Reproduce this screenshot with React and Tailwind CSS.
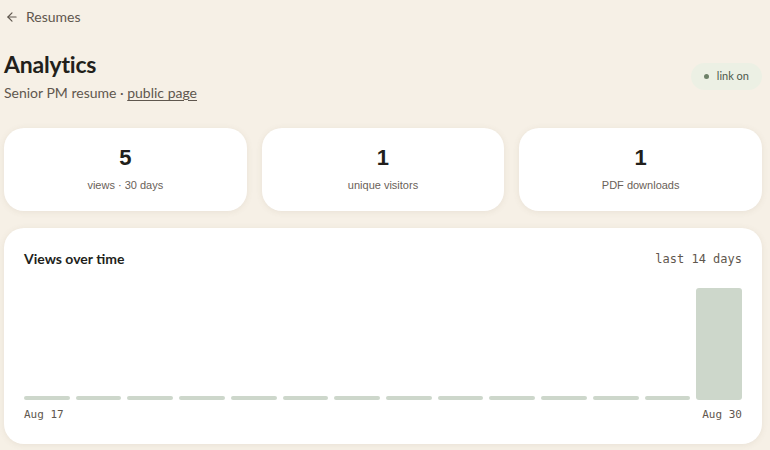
import { ArrowLeft } from 'lucide-react'

const views = [0, 0, 0, 0, 0, 0, 0, 0, 0, 0, 0, 0, 0, 5]

const stats = [
  { value: '5', label: 'views · 30 days' },
  { value: '1', label: 'unique visitors' },
  { value: '1', label: 'PDF downloads' },
]

export default function App() {
  const max = Math.max(...views)

  return (
    <div className="min-h-[450px] bg-[#f6f0e6] pl-[4px] pr-[8px] text-[#221f1b] font-['Lato',sans-serif]">
      <div className="flex items-center gap-[7px] pt-[6px] pl-[1px] text-[14px] text-[#5f574e]">
        <ArrowLeft size={14} strokeWidth={2} />
        <span>Resumes</span>
      </div>

      <div className="mt-[23px] flex items-start justify-between">
        <div>
          <h1 className="text-[23px] font-bold leading-[28px] tracking-[-0.2px]">Analytics</h1>
          <p className="mt-[4px] text-[14px] text-[#5f574e]">
            Senior PM resume · <span className="underline underline-offset-2">public page</span>
          </p>
        </div>
        <div className="mt-[13px] flex items-center gap-[8px] rounded-full bg-[#ecf0e4] px-[13px] py-[5px] text-[11px] text-[#4e5a4c]">
          <span className="h-[5px] w-[5px] rounded-full bg-[#6d8168]" />
          <span>link on</span>
        </div>
      </div>

      <div className="mt-[25px] grid grid-cols-3 gap-[15px]">
        {stats.map((s) => (
          <div
            key={s.label}
            className="flex h-[83px] flex-col items-center justify-center rounded-[20px] bg-white shadow-[0_1px_6px_rgba(120,100,70,0.10)]"
          >
            <div className="font-['Liberation_Sans',sans-serif] text-[22px] font-bold leading-[26px]">{s.value}</div>
            <div className="mt-[6px] font-['Liberation_Sans',sans-serif] text-[11px] text-[#6a6158]">{s.label}</div>
          </div>
        ))}
      </div>

      <div className="mt-[17px] rounded-[20px] bg-white px-[20px] pt-[20px] pb-[20px] shadow-[0_1px_6px_rgba(120,100,70,0.10)]">
        <div className="flex items-center justify-between">
          <h2 className="text-[14px] font-bold">Views over time</h2>
          <span className="font-['DejaVu_Sans_Mono',monospace] text-[12px] text-[#5f574e]">last 14 days</span>
        </div>
        <div className="mt-[19px] flex h-[112px] items-end gap-[6px]">
          {views.map((v, i) => (
            <div
              key={i}
              className="flex-1 rounded-[3px] bg-[#cdd7cb]"
              style={{ height: v === 0 ? 4 : (v / max) * 112 }}
            />
          ))}
        </div>
        <div className="mt-[7px] flex justify-between font-['DejaVu_Sans_Mono',monospace] text-[11px] text-[#5f574e]">
          <span>Aug 17</span>
          <span>Aug 30</span>
        </div>
      </div>
    </div>
  )
}
